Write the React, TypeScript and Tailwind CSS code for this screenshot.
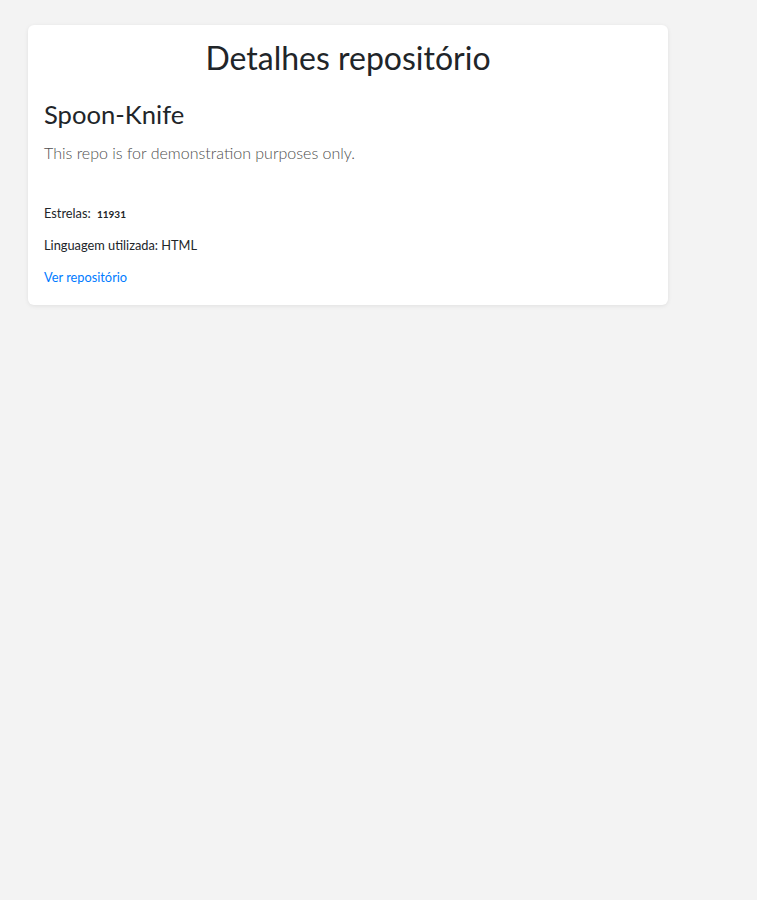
export default function App() {
  return (
    <div className="min-h-[900px] bg-[#f3f3f3] pt-[25px] pl-[28px]" style={{ fontFamily: "Lato, 'Noto Sans', sans-serif" }}>
      <div className="w-[640px] rounded-[6px] bg-white px-4 pt-[9px] pb-[18px] text-[#212529] shadow-[0_1px_4px_rgba(0,0,0,0.08)]">
        <h1 className="text-center text-[32px] leading-[48px] font-normal">Detalhes repositório</h1>
        <h2 className="mt-[16px] text-[25.6px] leading-[32px] font-normal">Spoon-Knife</h2>
        <p className="mt-[11px] text-[16px] leading-[24px] font-light text-[#4f4f4f]">This repo is for demonstration purposes only.</p>
        <p className="mt-[38px] text-[12.8px] leading-[20px]">
          Estrelas: <b className="ml-[3px] text-[10px] font-bold">11931</b>
        </p>
        <p className="mt-[11px] text-[12.8px] leading-[20px]">Linguagem utilizada: HTML</p>
        <a href="#" className="mt-[12px] block text-[12.8px] leading-[20px] text-[#007bff]">Ver repositório</a>
      </div>
    </div>
  );
}
